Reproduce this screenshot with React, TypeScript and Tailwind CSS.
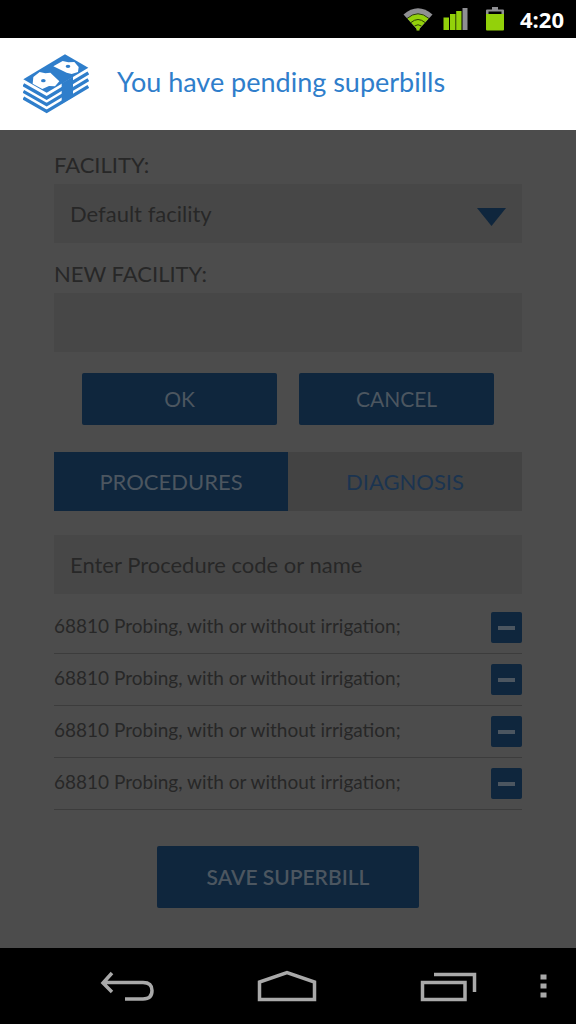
import { useState } from "react";

const procedures = [
  "68810 Probing, with or without irrigation;",
  "68810 Probing, with or without irrigation;",
  "68810 Probing, with or without irrigation;",
  "68810 Probing, with or without irrigation;",
];

const StatusBar = () => (
  <div className="flex h-[38px] items-center justify-end bg-black pr-3">
    <svg width="30" height="24" viewBox="0 0 30 24" aria-label="Wifi">
      <path d="M0.5 7.5Q15 -5 29.5 7.5L15 23.5Z" fill="#8f8f93" />
      <path d="M4.500 11.5Q15 3 25.500 11.5L16.5 21.5V23.5H13.5V21.5Z" fill="#93d10a" />
      <path d="M4 11.5Q15 2 26 11.5M8 15.5Q15 9.5 22 15.5M11.5 19Q15 16.5 18.5 19" fill="none" stroke="#2c4204" strokeWidth="1" />
    </svg>
    <svg className="ml-[10px]" width="25" height="22" viewBox="0 0 25 22" aria-label="Signal">
      <path d="M0.5 9.500h5.500V22h-5.500zM7 6h5.500v16H7zM13.200 3h5.300v19h-5.300z" fill="#93d10a" />
      <path d="M19.500 0h5v22h-5z" fill="#8f8f93" />
    </svg>
    <svg className="ml-[18px]" width="18" height="24" viewBox="0 0 18 24" aria-label="Battery">
      <path d="M6 0h6v2.500h5a1 1 0 0 1 1 1V8H0V3.500a1 1 0 0 1 1-1h5z" fill="#8f8f93" />
      <path d="M2.500 4.500h13V7h-13z" fill="#000" />
      <path d="M0 7h18v15.500a1 1 0 0 1-1 1H1a1 1 0 0 1-1-1z" fill="#93d10a" />
    </svg>
    <span className="ml-4 font-['Open_Sans',sans-serif] text-[22px] leading-6 font-bold text-white">4:20</span>
  </div>
);

const MoneyIcon = () => (
  <svg width="66" height="60" viewBox="68 55 198 180" aria-hidden="true">
    <path d="M69 131L194 56L264 96L139 171Z" fill="#2f7ecb" />
    <path
      d="M69 147L139 187L264 112M69 167L139 207L264 132M69 187L139 227L264 152"
      fill="none"
      stroke="#2f7ecb"
      strokeWidth="10"
    />
    <path d="M184 143L218 123V184L184 204Z" fill="#2f7ecb" />
    <path d="M97 144L99 124L118 109L135 113L150 111L177 137L164 152L146 151L126 160Z" fill="#fff" />
    <path d="M159 92L187 76L204 80L222 79L235 94L233 109L214 115L199 111Z" fill="#fff" />
    <ellipse cx="129" cy="135" rx="7" ry="5" fill="#2f7ecb" />
    <ellipse cx="203" cy="92" rx="7" ry="5" fill="#2f7ecb" />
  </svg>
);

const NavBar = () => (
  <nav className="flex h-[76px] items-center bg-black text-[#a9a9a9]">
    <button className="ml-[100px]" aria-label="Back">
      <svg width="54" height="32" viewBox="0 0 54 32" fill="none" stroke="currentColor" strokeWidth="3.5">
        <path d="M12 3L3 13L12 22M3 12.500H43Q52 12.500 52 20.500Q52 29 43 29H25" />
      </svg>
    </button>
    <button className="ml-[103px]" aria-label="Home">
      <svg width="60" height="32" viewBox="0 0 60 32" fill="none" stroke="currentColor" strokeWidth="3.5">
        <path d="M2.500 29.500V12L30 2.500L57.500 12V29.500Z" />
      </svg>
    </button>
    <button className="ml-[103px]" aria-label="Recent apps">
      <svg width="57" height="32" viewBox="0 0 57 32" fill="none" stroke="currentColor" strokeWidth="3.5">
        <path d="M2.500 12.500H45V29.500H2.500ZM14 4.500H54.500V22" />
      </svg>
    </button>
    <button className="mr-[29px] ml-auto" aria-label="Menu">
      <svg width="7" height="26" viewBox="0 0 7 26" fill="currentColor">
        <path d="M0.5 1.500h6v5h-6zM0.5 10.500h6v5h-6zM0.5 19.500h6v5h-6z" />
      </svg>
    </button>
  </nav>
);

const App = () => {
  const [tab, setTab] = useState("procedures");

  return (
    <div className="flex min-h-screen flex-col bg-[#4c4c4c] font-['Lato',sans-serif] text-[#272727]">
      <StatusBar />
      <header className="flex h-[92px] items-center gap-7 bg-white pl-[23px] text-[#2f7ecb]">
        <MoneyIcon />
        <h1 className="pb-1 text-[27px] leading-8">You have pending superbills</h1>
      </header>

      <main className="grow px-[54px] pt-5">
        <label htmlFor="facility" className="block pb-1 text-[22px] leading-[30px]">FACILITY:</label>
        <div className="relative">
          <select
            id="facility"
            className="block h-[59px] w-full appearance-none bg-[#474747] px-4 text-[22px]"
          >
            <option>Default facility</option>
          </select>
          <svg className="pointer-events-none absolute top-6 right-4" width="29" height="18" viewBox="0 0 29 18">
            <path d="M0 0H29L14.500 18Z" fill="#0f263d" />
          </svg>
        </div>

        <label htmlFor="new-facility" className="mt-4 block pb-1 text-[22px] leading-[30px]">NEW FACILITY:</label>
        <input id="new-facility" className="block h-[59px] w-full bg-[#474747] px-4 text-[22px]" />

        <div className="mt-[21px] grid grid-cols-2 gap-[22px] px-7 text-[21px] text-[#4c5660]">
          <button className="h-[52px] rounded-xs bg-[#0f263d]">OK</button>
          <button className="h-[52px] rounded-xs bg-[#0f263d]">CANCEL</button>
        </div>

        <div className="mt-[27px] grid grid-cols-2 text-[22px]" role="tablist">
          <button
            role="tab"
            aria-selected={tab === "procedures"}
            onClick={() => setTab("procedures")}
            className={`h-[59px] ${tab === "procedures" ? "bg-[#0f263d] text-[#4c5660]" : "bg-[#434343] text-[#1b3450]"}`}
          >
            PROCEDURES
          </button>
          <button
            role="tab"
            aria-selected={tab === "diagnosis"}
            onClick={() => setTab("diagnosis")}
            className={`h-[59px] ${tab === "diagnosis" ? "bg-[#0f263d] text-[#4c5660]" : "bg-[#434343] text-[#1b3450]"}`}
          >
            DIAGNOSIS
          </button>
        </div>

        <input
          aria-label="Procedure code or name"
          placeholder="Enter Procedure code or name"
          className="mt-6 block h-[59px] w-full bg-[#474747] px-4 text-[22px] placeholder:text-[#272727]"
        />

        <ul className="mt-2">
          {procedures.map((name, i) => (
            <li key={i} className="flex h-[52px] items-center justify-between border-b border-[#3c3c3c]">
              <span className="pb-1 text-[19px] leading-6">{name}</span>
              <button
                aria-label="Remove procedure"
                className="flex size-[31px] items-center justify-center rounded-xs bg-[#0f263d]"
              >
                <span className="h-1 w-[17px] bg-[#4c5660]" />
              </button>
            </li>
          ))}
        </ul>

        <button className="mx-auto mt-9 block h-[62px] w-[262px] rounded-xs bg-[#0f263d] text-[21px] font-semibold text-[#4c5660]">
          SAVE SUPERBILL
        </button>
      </main>

      <NavBar />
    </div>
  );
};

export default App;
